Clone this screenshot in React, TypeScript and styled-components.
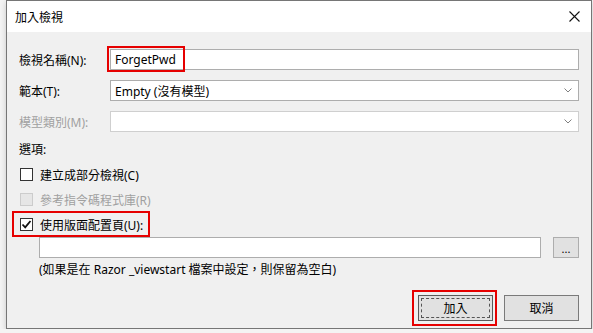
import React from "react";
import styled, { createGlobalStyle } from "styled-components";

const Global = createGlobalStyle`
  html, body { margin: 0; padding: 0; background: #f4f4f4; }
  body { font-family: "Noto Sans", "Noto Sans CJK TC", sans-serif; font-size: 12px; color: #000; }
  * { box-sizing: border-box; }
`;

const Window = styled.div`
  margin-left: 6px;
  width: 586px;
  height: 329px;
  border: 1px solid #767676;
  background: #f0f0f0;
  box-shadow: 0 2px 6px rgba(0,0,0,0.18);
  display: flex;
  flex-direction: column;
`;

const TitleBar = styled.div`
  height: 31px;
  background: #fff;
  display: flex;
  align-items: center;
  justify-content: space-between;
  padding: 0 11px 0 8px;
  font-size: 12px;
`;

const Body = styled.div`
  flex: 1;
  display: flex;
  flex-direction: column;
  padding: 17px 12px 7px 12px;
`;

const FieldRow = styled.div`
  display: flex;
  align-items: center;
  height: 21px;
  margin-bottom: 10px;
`;

const Label = styled.div<{ $disabled?: boolean }>`
  width: 91px;
  color: ${p => (p.$disabled ? "#a0a0a0" : "#000")};
  white-space: nowrap;
`;

const Field = styled.div<{ $disabled?: boolean }>`
  position: relative;
  flex: 1;
  height: 21px;
  background: #fff;
  border: 1px solid ${p => (p.$disabled ? "#cfcfcf" : "#adadad")};
  display: flex;
  align-items: center;
  padding-left: 4px;
  padding-right: 6px;
`;

const FieldText = styled.span`
  flex: 1;
  white-space: nowrap;
`;

const Mark = styled.div<{ $l: number; $t: number; $w: number; $h: number }>`
  position: absolute;
  left: ${p => p.$l}px;
  top: ${p => p.$t}px;
  width: ${p => p.$w}px;
  height: ${p => p.$h}px;
  border: 2px solid #e60000;
  pointer-events: none;
`;

const SectionLabel = styled.div`
  margin-top: 0px;
  height: 16px;
  line-height: 16px;
`;

const CheckList = styled.div`
  display: flex;
  flex-direction: column;
  gap: 6px;
  margin-top: 7px;
  padding-left: 1px;
`;

const CheckRow = styled.div<{ $disabled?: boolean }>`
  position: relative;
  display: flex;
  align-items: center;
  height: 19px;
  gap: 7px;
  color: ${p => (p.$disabled ? "#a0a0a0" : "#000")};
`;

const Box = styled.div<{ $disabled?: boolean }>`
  width: 13px;
  height: 13px;
  border: 1px solid ${p => (p.$disabled ? "#cccccc" : "#333")};
  background: ${p => (p.$disabled ? "#e6e6e6" : "#fff")};
  display: flex;
  align-items: center;
  justify-content: center;
`;

const LayoutRow = styled.div`
  display: flex;
  align-items: center;
  gap: 12px;
  margin-top: 3px;
  padding-left: 20px;
  height: 21px;
`;

const LayoutInput = styled.div`
  flex: 1;
  height: 21px;
  background: #fff;
  border: 1px solid #adadad;
`;

const SmallButton = styled.div`
  width: 26px;
  height: 21px;
  background: #e1e1e1;
  border: 1px solid #adadad;
  display: flex;
  justify-content: center;
  align-items: flex-end;
  padding-bottom: 3px;
  font-size: 11px;
  line-height: 10px;
`;

const Hint = styled.div`
  margin-top: 4px;
  padding-left: 20px;
  height: 16px;
  line-height: 16px;
  white-space: nowrap;
`;

const Buttons = styled.div`
  margin-top: auto;
  display: flex;
  justify-content: flex-end;
  gap: 11px;
`;

const Button = styled.div<{ $default?: boolean }>`
  position: relative;
  width: 75px;
  height: 26px;
  background: #e1e1e1;
  border: 1px solid ${p => (p.$default ? "#5a5a5a" : "#7a7a7a")};
  display: flex;
  align-items: center;
  justify-content: center;
`;

const Focus = styled.div`
  position: absolute;
  inset: 2px;
  border: 1px dashed #555;
  pointer-events: none;
`;

const Chevron = () => (
  <svg width="8" height="5" viewBox="0 0 8 5">
    <path d="M0.5 0.5 L4 4 L7.5 0.5" fill="none" stroke="#808080" strokeWidth="1" />
  </svg>
);

const Close = () => (
  <svg width="11" height="11" viewBox="0 0 11 11">
    <path d="M0.5 0.5 L10.5 10.5 M10.5 0.5 L0.5 10.5" stroke="#111" strokeWidth="1.1" />
  </svg>
);

const Check = () => (
  <svg width="11" height="11" viewBox="0 0 11 11">
    <path d="M1.5 5.5 L4.2 8.3 L9.5 2" fill="none" stroke="#111" strokeWidth="1.8" />
  </svg>
);

export default function App() {
  return (
    <>
      <Global />
      <Window>
        <TitleBar>
          <span>加入檢視</span>
          <Close />
        </TitleBar>
        <Body>
          <FieldRow>
            <Label>檢視名稱(N):</Label>
            <Field>
              <FieldText>ForgetPwd</FieldText>
              <Mark $l={-4} $t={-4} $w={78} $h={26} />
            </Field>
          </FieldRow>
          <FieldRow>
            <Label>範本(T):</Label>
            <Field>
              <FieldText>Empty (沒有模型)</FieldText>
              <Chevron />
            </Field>
          </FieldRow>
          <FieldRow>
            <Label $disabled>模型類別(M):</Label>
            <Field $disabled>
              <FieldText></FieldText>
              <Chevron />
            </Field>
          </FieldRow>
          <SectionLabel>選項:</SectionLabel>
          <CheckList>
            <CheckRow>
              <Box />
              <span>建立成部分檢視(C)</span>
            </CheckRow>
            <CheckRow $disabled>
              <Box $disabled />
              <span>參考指令碼程式庫(R)</span>
            </CheckRow>
            <CheckRow>
              <Box>
                <Check />
              </Box>
              <span>使用版面配置頁(U):</span>
              <Mark $l={-8} $t={-4} $w={138} $h={26} />
            </CheckRow>
          </CheckList>
          <LayoutRow>
            <LayoutInput />
            <SmallButton>...</SmallButton>
          </LayoutRow>
          <Hint>(如果是在 Razor _viewstart 檔案中設定，則保留為空白)</Hint>
          <Buttons>
            <Button $default>
              加入
              <Focus />
              <Mark $l={-7} $t={-6} $w={85} $h={36} />
            </Button>
            <Button>取消</Button>
          </Buttons>
        </Body>
      </Window>
    </>
  );
}
